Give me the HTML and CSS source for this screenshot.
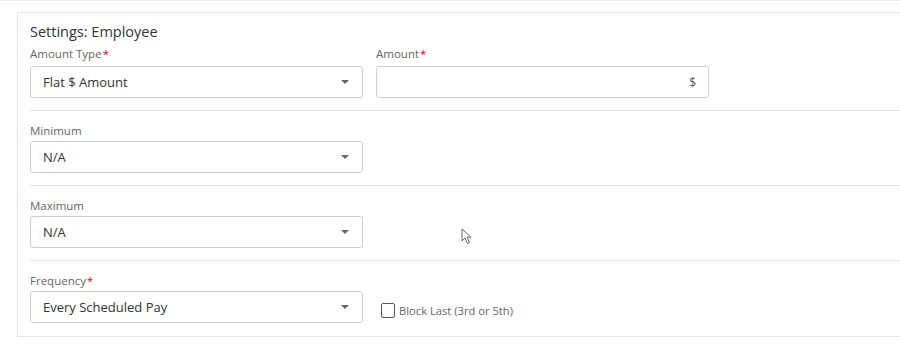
FILE: index.html
```html
<!DOCTYPE html>
<html lang="en">
<head>
  <meta charset="UTF-8" />
  <title>Settings: Employee</title>
  <link rel="stylesheet" href="styles.css">
</head>
<body>
  <div class="page">
    <div class="panel">
      <h2 class="panel-title">Settings: Employee</h2>

      <div class="row first">
        <div class="field">
          <label class="field-label">Amount Type<span class="req">*</span></label>
          <div class="select">
            <span>Flat $ Amount</span>
            <span class="caret"></span>
          </div>
        </div>
        <div class="field side">
          <label class="field-label">Amount<span class="req">*</span></label>
          <div class="input">
            <span class="unit">$</span>
          </div>
        </div>
      </div>

      <div class="row">
        <div class="field">
          <label class="field-label">Minimum</label>
          <div class="select">
            <span>N/A</span>
            <span class="caret"></span>
          </div>
        </div>
      </div>

      <div class="row">
        <div class="field">
          <label class="field-label">Maximum</label>
          <div class="select">
            <span>N/A</span>
            <span class="caret"></span>
          </div>
        </div>
      </div>

      <div class="row last">
        <div class="field">
          <label class="field-label">Frequency<span class="req">*</span></label>
          <div class="select">
            <span>Every Scheduled Pay</span>
            <span class="caret"></span>
          </div>
        </div>
        <div class="field side check-col">
          <label class="check">
            <span class="box"></span>
            Block Last (3rd or 5th)
          </label>
        </div>
      </div>
    </div>

    <svg class="cursor" width="12" height="18" viewBox="0 0 12 18">
      <path d="M1 1 L1 13 L4 10 L6.5 15.5 L8.5 14.6 L6 9.2 L10 9.2 Z" fill="#fff" stroke="#666" stroke-width="1" stroke-linejoin="round"/>
    </svg>
  </div>
</body>
</html>
```

FILE: styles.css
```css
html, body {
  margin: 0;
  padding: 0;
  background: #fff;
  font-family: 'Open Sans', 'Noto Sans', sans-serif;
  color: #333;
  overflow: hidden;
}

.page {
  position: relative;
  height: 351px;
  border-top: 1px solid #eeeeee;
  box-sizing: border-box;
}

.panel {
  margin: 11px -20px 0 17px;
  border: 1px solid #e4e4e4;
  padding-left: 12px;
}

.panel-title {
  margin: 0;
  padding-top: 9px;
  font-size: 14.5px;
  font-weight: 400;
  line-height: 20px;
  color: #333;
}

.row {
  display: flex;
  gap: 13px;
  border-bottom: 1px solid #e4e4e4;
  padding: 12px 0 12px;
}

.row.first {
  padding-top: 4px;
  padding-bottom: 12px;
}

.row.last {
  border-bottom: none;
  padding-bottom: 13px;
}

.field {
  width: 333px;
  display: flex;
  flex-direction: column;
}

.field-label {
  font-size: 11.5px;
  line-height: 16px;
  color: #666;
  margin-bottom: 2px;
}

.row.first .field-label {
  margin-bottom: 4px;
}

.req {
  color: #d0021b;
  margin-left: 1px;
}

.select, .input {
  height: 32px;
  box-sizing: border-box;
  border: 1px solid #cfcfcf;
  border-radius: 3px;
  display: flex;
  align-items: center;
  justify-content: space-between;
  padding: 0 12px 0 12px;
  font-size: 13px;
  color: #333;
}

.caret {
  width: 0;
  height: 0;
  border-left: 4.5px solid transparent;
  border-right: 4.5px solid transparent;
  border-top: 4.5px solid #666;
  margin-right: 1px;
}

.input {
  justify-content: flex-end;
  padding-right: 12px;
}

.unit {
  font-size: 12px;
  color: #555;
}

.check-col {
  justify-content: flex-end;
  padding-left: 5px;
  box-sizing: border-box;
}

.check {
  display: flex;
  align-items: center;
  gap: 4px;
  font-size: 11.2px;
  color: #666;
  height: 32px;
  padding-top: 7px;
  box-sizing: border-box;
}

.box {
  width: 12px;
  height: 13px;
  border: 1.5px solid #555;
  border-radius: 2px;
}

.cursor {
  position: absolute;
  left: 461px;
  top: 227px;
}
```
